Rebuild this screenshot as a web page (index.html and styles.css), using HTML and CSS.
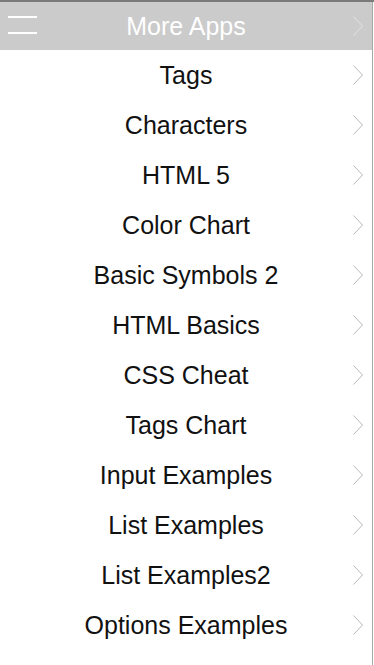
FILE: index.html
```html
<!DOCTYPE html>
<html lang="en">
<head>
    <meta charset="UTF-8">
    <meta name="viewport" content="width=device-width, initial-scale=1.0">
    <title>More Apps</title>
    <link rel="stylesheet" href="styles.css">
</head>
<body>
    <div class="page">
        <div class="header">
            <div class="menu-btn">
                <span></span>
                <span></span>
            </div>
            <div class="title">More Apps</div>
            <svg class="chevron head-chevron" viewBox="0 0 10 20"><polyline points="0.5,0.5 9.5,10 0.5,19.5"/></svg>
        </div>
        <ul class="app-list">
            <li class="app-item">Tags<svg class="chevron" viewBox="0 0 10 20"><polyline points="0.5,0.5 9.5,10 0.5,19.5"/></svg></li>
            <li class="app-item">Characters<svg class="chevron" viewBox="0 0 10 20"><polyline points="0.5,0.5 9.5,10 0.5,19.5"/></svg></li>
            <li class="app-item">HTML 5<svg class="chevron" viewBox="0 0 10 20"><polyline points="0.5,0.5 9.5,10 0.5,19.5"/></svg></li>
            <li class="app-item">Color Chart<svg class="chevron" viewBox="0 0 10 20"><polyline points="0.5,0.5 9.5,10 0.5,19.5"/></svg></li>
            <li class="app-item">Basic Symbols 2<svg class="chevron" viewBox="0 0 10 20"><polyline points="0.5,0.5 9.5,10 0.5,19.5"/></svg></li>
            <li class="app-item">HTML Basics<svg class="chevron" viewBox="0 0 10 20"><polyline points="0.5,0.5 9.5,10 0.5,19.5"/></svg></li>
            <li class="app-item">CSS Cheat<svg class="chevron" viewBox="0 0 10 20"><polyline points="0.5,0.5 9.5,10 0.5,19.5"/></svg></li>
            <li class="app-item">Tags Chart<svg class="chevron" viewBox="0 0 10 20"><polyline points="0.5,0.5 9.5,10 0.5,19.5"/></svg></li>
            <li class="app-item">Input Examples<svg class="chevron" viewBox="0 0 10 20"><polyline points="0.5,0.5 9.5,10 0.5,19.5"/></svg></li>
            <li class="app-item">List Examples<svg class="chevron" viewBox="0 0 10 20"><polyline points="0.5,0.5 9.5,10 0.5,19.5"/></svg></li>
            <li class="app-item">List Examples2<svg class="chevron" viewBox="0 0 10 20"><polyline points="0.5,0.5 9.5,10 0.5,19.5"/></svg></li>
            <li class="app-item">Options Examples<svg class="chevron" viewBox="0 0 10 20"><polyline points="0.5,0.5 9.5,10 0.5,19.5"/></svg></li>
        </ul>
    </div>
</body>
</html>
```

FILE: styles.css
```css
html,
body {
    width: 100%;
    height: 100%;
    margin: 0;
    padding: 0;
}

body {
    background-color: #fff;
    font-family: "Liberation Sans", Arial, sans-serif;
    border-top: 2px solid #7a7a7a;
    box-sizing: border-box;
    overflow: hidden;
}

.page {
    width: 372px;
    height: 100%;
    border-right: 1px solid #a8a8a8;
    background-color: #fff;
}

.header {
    height: 48px;
    background-color: #cbcbcb;
    display: flex;
    align-items: center;
    justify-content: center;
    position: relative;
}

.menu-btn {
    position: absolute;
    left: 8px;
    top: 14px;
    width: 29px;
    height: 18px;
    display: flex;
    flex-direction: column;
    justify-content: space-between;
}

.menu-btn>span {
    display: block;
    height: 2px;
    background-color: #fff;
}

.title {
    color: #fff;
    font-size: 25px;
    padding-top: 1px;
}

.chevron {
    position: absolute;
    right: 9px;
    width: 10px;
    height: 20px;
    fill: none;
    stroke: #b8b8b8;
    stroke-width: 1;
}

.head-chevron {
    top: 14px;
    stroke: #e2e2e2;
}

.app-list {
    list-style: none;
    margin: 0;
    padding: 0;
}

.app-item {
    height: 50px;
    display: flex;
    align-items: center;
    justify-content: center;
    position: relative;
    font-size: 25px;
    color: #111;
    padding-top: 1px;
    box-sizing: border-box;
}

.app-item>.chevron {
    top: 15px;
}
```
